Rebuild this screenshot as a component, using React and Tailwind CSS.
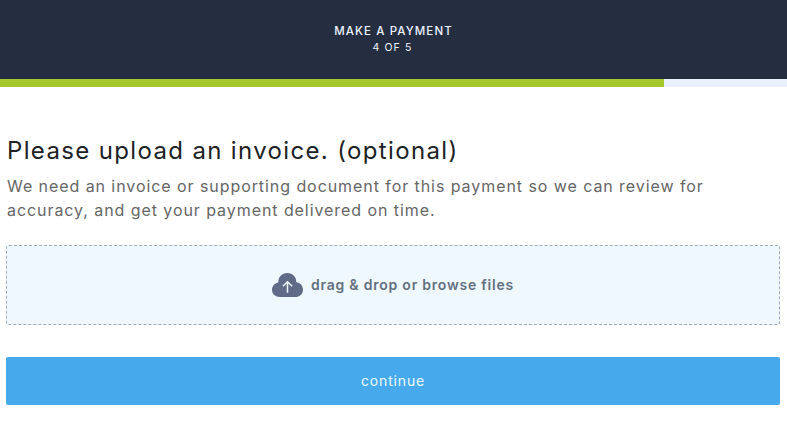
function CloudUploadIcon() {
  return (
    <svg width="31" height="24" viewBox="0 0 31 24" fill="none" className="shrink-0">
      <path
        d="M8 24C3.4 24 0 21 0 16.8C0 13 2.7 10 6.3 9.4C6.1 4 10 0 15.3 0C20.6 0 24.5 4 24.3 9.3C28.2 9.6 31 12.8 31 16.7C31 21 27.7 24 23.3 24Z"
        fill="#5f6b87"
      />
      <path d="M15.5 19.8V8.8M10.9 13.3L15.5 8.7L20.1 13.3" stroke="#edf6ff" strokeWidth="1.5" />
    </svg>
  );
}

export default function App() {
  return (
    <div className="h-[433px] overflow-hidden bg-white font-['Inter',sans-serif]">
      {/* Header */}
      <header className="flex h-[79px] flex-col items-center bg-[#252e40] pt-[23px] text-[#edf3ff]">
        <div className="text-[11.5px] leading-4 font-medium tracking-[1.1px]">MAKE A PAYMENT</div>
        <div className="mt-px pr-0.5 text-[10.5px] leading-4 tracking-[1.1px]">4 OF 5</div>
      </header>

      {/* Progress */}
      <div className="h-2 bg-[#e9effc]">
        <div className="h-full w-[664px] bg-[#a6c729]" />
      </div>

      <main className="pr-[7px] pl-1.5 pt-12">
        <h1 className="pl-px text-[24px] leading-8 tracking-[1.35px] whitespace-nowrap text-[#202124]">
          Please upload an invoice. (optional)
        </h1>
        <p className="mt-[7px] pl-px text-[16px] leading-6 tracking-[0.93px] whitespace-nowrap text-[#666]">
          We need an invoice or supporting document for this payment so we can review for
          <br />
          accuracy, and get your payment delivered on time.
        </p>

        {/* Drop zone */}
        <div className="mt-[23px] flex h-20 items-center justify-center gap-2 rounded-[3px] border border-dashed border-[#9faabd] bg-[#eff7ff]">
          <CloudUploadIcon />
          <span className="pb-0.5 text-[14px] font-semibold tracking-[0.78px] text-[#64707f]">
            drag &amp; drop or browse files
          </span>
        </div>

        <button className="mt-8 block h-12 w-full rounded-[2px] bg-[#46a9eb] pb-0.5 text-[14px] tracking-[0.85px] text-[#effaff]">
          continue
        </button>
      </main>
    </div>
  );
}
